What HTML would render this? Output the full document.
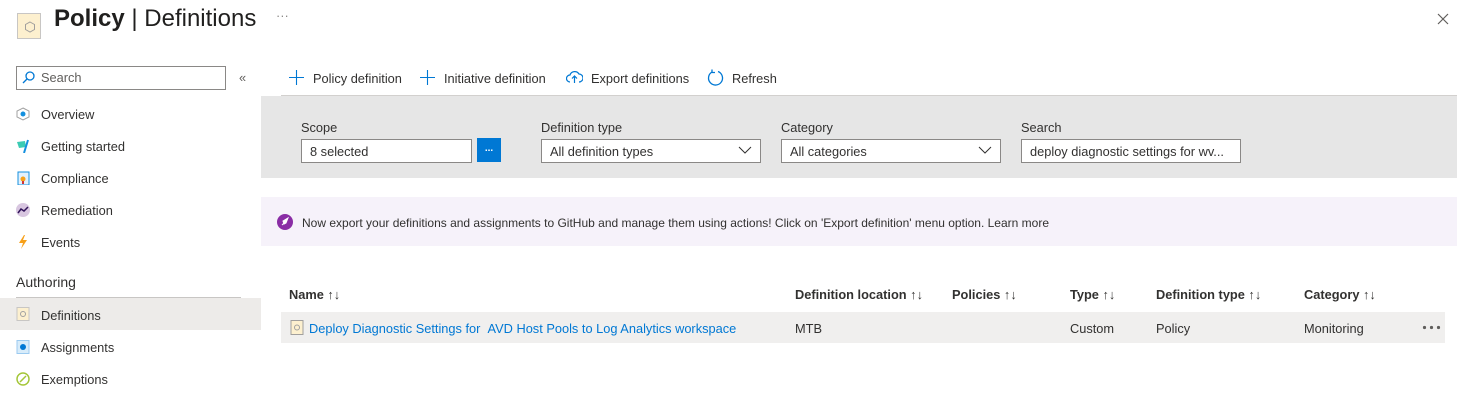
<!DOCTYPE html>
<html><head><style>
body{margin:0;width:1457px;height:404px;position:relative;font-family:"Liberation Sans",sans-serif;font-size:12.8px;color:#323130;background:#fff;overflow:hidden}
.a{position:absolute;white-space:nowrap}
.nav{left:41px}
.ic{position:absolute;left:16px;width:14px;height:14px}
.inp{position:absolute;background:#fff;border:1px solid #8a8886;height:21px;box-sizing:border-box;padding:3px 8px;font-size:12.8px;line-height:14px}
.th{font-weight:bold;top:287px}
.chev{position:absolute;right:8px;top:4px}
</style></head><body>
<!-- header -->
<div class="a" style="left:17px;top:13px;width:24px;height:26px;background:#fdf0cf;border:1px solid #c8c6c4;box-sizing:border-box"></div>
<svg class="a" style="left:24px;top:21px" width="12" height="12"><polygon points="6,1 10.5,3.5 10.5,8.5 6,11 1.5,8.5 1.5,3.5" fill="none" stroke="#a19f9d"/></svg>
<div class="a" style="left:54px;top:5px;font-size:24px;color:#201f1e"><b>Policy</b> | Definitions</div>
<div class="a" style="left:276px;top:8px;color:#8a8886">···</div>
<svg class="a" style="left:1437px;top:13px" width="12" height="12"><path d="M1 1 L11 11 M11 1 L1 11" stroke="#605e5c" stroke-width="1.2"/></svg>
<!-- sidebar -->
<div class="inp" style="left:16px;top:66px;width:210px;height:24px;padding:4px 24px;color:#605e5c">Search</div>
<svg class="a" style="left:22px;top:71px" width="13" height="13"><circle cx="8" cy="5" r="4" fill="none" stroke="#0078d4" stroke-width="1.3"/><line x1="5" y1="8" x2="1" y2="12" stroke="#0078d4" stroke-width="1.3"/></svg>
<div class="a" style="left:239px;top:70px;color:#605e5c">«</div>
<svg class="ic" style="top:107px"><polygon points="7,1 13,4 13,10 7,13 1,10 1,4" fill="none" stroke="#a0a0a0"/><circle cx="7" cy="7" r="2.5" fill="#1490df"/></svg>
<div class="a nav" style="top:107px">Overview</div>
<svg class="ic" style="top:139px"><path d="M1 3 L9 2 L10 8 L3 9Z" fill="#3ccbb4"/><line x1="12" y1="1" x2="8" y2="14" stroke="#1490df" stroke-width="2"/></svg>
<div class="a nav" style="top:139px">Getting started</div>
<svg class="ic" style="top:171px"><rect x="2" y="1" width="11" height="13" fill="#e3f1fc" stroke="#1490df"/><circle cx="7" cy="8" r="2.5" fill="#f7a019"/><rect x="6" y="10" width="2" height="3" fill="#d13438"/></svg>
<div class="a nav" style="top:171px">Compliance</div>
<svg class="ic" style="top:203px"><circle cx="7" cy="7" r="7" fill="#d8c6e0"/><path d="M2 10 L5 6 L8 8 L12 4" stroke="#32145a" stroke-width="1.5" fill="none"/></svg>
<div class="a nav" style="top:203px">Remediation</div>
<svg class="ic" style="top:235px"><path d="M8 0 L3 8 L7 8 L5 14 L11 5 L7 5 L9 0Z" fill="#f7a019"/></svg>
<div class="a nav" style="top:235px">Events</div>
<div class="a" style="left:16px;top:274px;font-size:14px;color:#323130">Authoring</div>
<div class="a" style="left:16px;top:297px;width:225px;height:1px;background:#c8c6c4"></div>
<div class="a" style="left:0;top:298px;width:261px;height:32px;background:#edebe9"></div>
<svg class="ic" style="top:307px"><rect x="1" y="0.5" width="12" height="13" fill="#fdf0cf" stroke="#c8c6c4"/><circle cx="7" cy="7" r="2.5" fill="none" stroke="#a0a0a0"/></svg>
<div class="a nav" style="top:308px">Definitions</div>
<svg class="ic" style="top:340px"><rect x="1" y="0.5" width="12" height="13" fill="#d8ecfa" stroke="#9bcaf0"/><circle cx="7" cy="7" r="3" fill="#0078d4"/></svg>
<div class="a nav" style="top:340px">Assignments</div>
<svg class="ic" style="top:372px"><circle cx="7" cy="7" r="6" fill="none" stroke="#a4c639" stroke-width="1.5"/><line x1="4" y1="10" x2="10" y2="4" stroke="#a4c639" stroke-width="1.5"/></svg>
<div class="a nav" style="top:372px">Exemptions</div>
<!-- toolbar -->
<svg class="a" style="left:289px;top:70px" width="15" height="15"><path d="M7.5 0 V15 M0 7.5 H15" stroke="#0078d4" stroke-width="1.1"/></svg>
<div class="a" style="left:313px;top:71px">Policy definition</div>
<svg class="a" style="left:420px;top:70px" width="15" height="15"><path d="M7.5 0 V15 M0 7.5 H15" stroke="#0078d4" stroke-width="1.1"/></svg>
<div class="a" style="left:444px;top:71px">Initiative definition</div>
<svg class="a" style="left:566px;top:70px" width="17" height="14"><path d="M4 12 A3.5 3.5 0 0 1 4 5 A5 5 0 0 1 13 4 A3.5 3.5 0 0 1 13 12" fill="none" stroke="#0078d4" stroke-width="1.2"/><path d="M8.5 13 V6 M6 8.5 L8.5 6 L11 8.5" fill="none" stroke="#0078d4" stroke-width="1.2"/></svg>
<div class="a" style="left:591px;top:71px">Export definitions</div>
<svg class="a" style="left:707px;top:69px" width="17" height="17"><path d="M5 3 A7 7 0 1 0 11 2.5" fill="none" stroke="#0078d4" stroke-width="1.3"/><path d="M5 0.5 V3.5 H8" fill="none" stroke="#0078d4" stroke-width="1.3"/></svg>
<div class="a" style="left:732px;top:71px">Refresh</div>
<div class="a" style="left:281px;top:95px;width:1176px;height:1px;background:#d2d0ce"></div>
<!-- filter panel -->
<div class="a" style="left:261px;top:96px;width:1196px;height:82px;background:#e6e6e6"></div>
<div class="a" style="left:301px;top:120px">Scope</div>
<div class="inp" style="left:301px;top:139px;width:171px;height:24px;padding:5px 8px">8 selected</div>
<div class="a" style="left:477px;top:138px;width:24px;height:24px;background:#0078d4;color:#fff;text-align:center;font-size:10px;line-height:22px;font-weight:bold">...</div>
<div class="a" style="left:541px;top:120px">Definition type</div>
<div class="inp" style="left:541px;top:139px;width:220px;height:24px;padding:5px 8px">All definition types<svg class="chev" style="top:6px" width="14" height="9"><path d="M1 1 L7 7 L13 1" fill="none" stroke="#323130"/></svg></div>
<div class="a" style="left:781px;top:120px">Category</div>
<div class="inp" style="left:781px;top:139px;width:220px;height:24px;padding:5px 8px">All categories<svg class="chev" style="top:6px" width="14" height="9"><path d="M1 1 L7 7 L13 1" fill="none" stroke="#323130"/></svg></div>
<div class="a" style="left:1021px;top:120px">Search</div>
<div class="inp" style="left:1021px;top:139px;width:220px;height:24px;padding:5px 8px;overflow:hidden">deploy diagnostic settings for wv...</div>
<!-- banner -->
<div class="a" style="left:261px;top:197px;width:1196px;height:49px;background:#f6f2fa"></div>
<svg class="a" style="left:277px;top:214px" width="16" height="16"><circle cx="8" cy="8" r="8" fill="#8a2da5"/><path d="M5 11 L7 9 M6 7 L11 4 L9 9 L7 10Z" stroke="#fff" fill="#fff" stroke-width="1"/></svg>
<div class="a" style="left:302px;top:216px;font-size:12px">Now export your definitions and assignments to GitHub and manage them using actions! Click on 'Export definition' menu option. Learn more</div>
<!-- table -->
<div class="a th" style="left:289px">Name ↑↓</div>
<div class="a th" style="left:795px">Definition location ↑↓</div>
<div class="a th" style="left:952px">Policies ↑↓</div>
<div class="a th" style="left:1070px">Type ↑↓</div>
<div class="a th" style="left:1156px">Definition type ↑↓</div>
<div class="a th" style="left:1304px">Category ↑↓</div>
<div class="a" style="left:281px;top:312px;width:1164px;height:31px;background:#f0efee"></div>
<svg class="a" style="left:290px;top:320px" width="14" height="16"><rect x="1" y="0.5" width="12" height="14" fill="#fdf0cf" stroke="#a19f9d"/><circle cx="7" cy="7.5" r="2.5" fill="none" stroke="#a0a0a0"/></svg>
<div class="a" style="left:309px;top:321px;color:#0078d4">Deploy Diagnostic Settings for &nbsp;AVD Host Pools to Log Analytics workspace</div>
<div class="a" style="left:795px;top:321px">MTB</div>
<div class="a" style="left:1070px;top:321px">Custom</div>
<div class="a" style="left:1156px;top:321px">Policy</div>
<div class="a" style="left:1304px;top:321px">Monitoring</div>
<svg class="a" style="left:1422px;top:325px" width="20" height="5"><circle cx="2.5" cy="2.5" r="1.6" fill="#605e5c"/><circle cx="9.5" cy="2.5" r="1.6" fill="#605e5c"/><circle cx="16.5" cy="2.5" r="1.6" fill="#605e5c"/></svg>
</body></html>
